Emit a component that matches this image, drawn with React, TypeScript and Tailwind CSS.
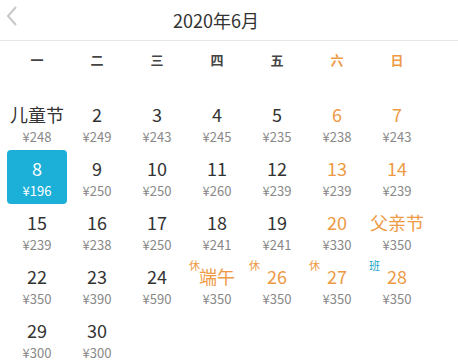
import React from "react";

type Day = {
  label: string;
  price: string;
  weekend?: boolean;
  badge?: "休" | "班";
  selected?: boolean;
};

const weekdays = ["一", "二", "三", "四", "五", "六", "日"];

const days: Day[] = [
  { label: "儿童节", price: "¥248" },
  { label: "2", price: "¥249" },
  { label: "3", price: "¥243" },
  { label: "4", price: "¥245" },
  { label: "5", price: "¥235" },
  { label: "6", price: "¥238", weekend: true },
  { label: "7", price: "¥243", weekend: true },
  { label: "8", price: "¥196", selected: true },
  { label: "9", price: "¥250" },
  { label: "10", price: "¥250" },
  { label: "11", price: "¥260" },
  { label: "12", price: "¥239" },
  { label: "13", price: "¥239", weekend: true },
  { label: "14", price: "¥239", weekend: true },
  { label: "15", price: "¥239" },
  { label: "16", price: "¥238" },
  { label: "17", price: "¥250" },
  { label: "18", price: "¥241" },
  { label: "19", price: "¥241" },
  { label: "20", price: "¥330", weekend: true },
  { label: "父亲节", price: "¥350", weekend: true },
  { label: "22", price: "¥350" },
  { label: "23", price: "¥390" },
  { label: "24", price: "¥590" },
  { label: "端午", price: "¥350", weekend: true, badge: "休" },
  { label: "26", price: "¥350", weekend: true, badge: "休" },
  { label: "27", price: "¥350", weekend: true, badge: "休" },
  { label: "28", price: "¥350", weekend: true, badge: "班" },
  { label: "29", price: "¥300" },
  { label: "30", price: "¥300" },
];

const DayCell = ({ day }: { day: Day }) => {
  const labelColor = day.selected
    ? "text-white"
    : day.weekend
      ? "text-[#ee9a45]"
      : "text-[#333]";
  return (
    <div
      className={`relative flex h-[54px] flex-col items-center rounded-[4px] pt-[5px] ${
        day.selected ? "bg-[#1cb0d9]" : ""
      }`}
    >
      {day.badge && (
        <span
          className={`absolute left-[2px] top-[0px] text-[11px] leading-[14px] ${
            day.badge === "班" ? "text-[#1aa7c9]" : "text-[#ee9a45]"
          }`}
        >
          {day.badge}
        </span>
      )}
      <span className={`text-[18px] leading-[26px] ${labelColor}`}>
        {day.label}
      </span>
      <span
        className={`text-[13px] leading-[19px] ${
          day.selected ? "text-white" : "text-[#888]"
        }`}
      >
        {day.price}
      </span>
    </div>
  );
};

export default function App() {
  return (
    <div
      className="h-[362px] w-[458px] overflow-hidden bg-white"
      style={{ fontFamily: '"Noto Sans CJK SC", "Noto Sans", sans-serif' }}
    >
      <div className="relative flex h-[41px] items-center justify-center border-b border-[#e6e6e6]">
        <svg
          className="absolute left-[5px] top-[5px]"
          width="14"
          height="22"
          viewBox="0 0 14 22"
          fill="none"
          stroke="#c8c8c8"
          strokeWidth="2"
        >
          <path d="M11 2 L3 11 L11 20" />
        </svg>
        <span className="ml-[-26px] text-[18px] text-[#333]">2020年6月</span>
      </div>
      <div className="ml-[7px] grid w-[420px] grid-cols-7 pt-[9px] pb-[26px]">
        {weekdays.map((w, i) => (
          <div
            key={w}
            className={`text-center text-[13px] font-semibold leading-[20px] ${
              i >= 5 ? "text-[#ee9a45]" : "text-[#444]"
            }`}
          >
            {w}
          </div>
        ))}
      </div>
      <div className="ml-[7px] grid w-[420px] grid-cols-7">
        {days.map((d) => (
          <DayCell key={d.label} day={d} />
        ))}
      </div>
    </div>
  );
}
